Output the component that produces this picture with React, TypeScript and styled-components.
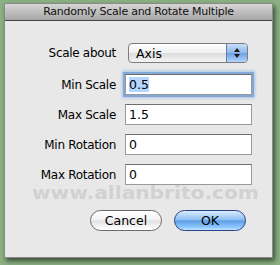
import { Fragment } from "react";
import styled, { createGlobalStyle } from "styled-components";

const Global = createGlobalStyle`
	html, body {
		margin: 0;
		padding: 0;
		background: #8cb283;
		font-family: "DejaVu Sans", "Liberation Sans", sans-serif;
	}
`;

const Page = styled.div`
	width: 280px;
	height: 265px;
	padding: 3px 0 0 4px;
	box-sizing: border-box;
	overflow: hidden;
`;

const Dialog = styled.div`
	position: relative;
	width: 269px;
	height: 255px;
	background: #e8e8e8;
	border: 1px solid #8a8a8a;
	box-sizing: border-box;
	box-shadow: 2px 3px 5px rgba(30, 40, 30, 0.75);
	display: flex;
	flex-direction: column;
`;

const TitleBar = styled.div`
	height: 16px;
	background: linear-gradient(#d6d6d6, #a6a6a6);
	border-bottom: 1px solid #444;
	font-size: 11px;
	letter-spacing: -0.25px;
	color: #111;
	text-align: center;
	line-height: 16px;
`;

const Form = styled.div`
	position: relative;
	z-index: 1;
	display: grid;
	grid-template-columns: 111px 127px;
	column-gap: 9px;
	row-gap: 9px;
	padding-top: 22px;
	align-items: center;
`;

const Label = styled.div`
	font-size: 12px;
	letter-spacing: -0.3px;
	color: #000;
	text-align: right;
`;

const PopupRow = styled.div`
	grid-column: 1 / span 2;
	display: grid;
	grid-template-columns: 111px 120px;
	column-gap: 12px;
	align-items: center;
	margin-bottom: 2px;
`;

const Popup = styled.div`
	height: 20px;
	border: 1px solid #7c7c7c;
	border-radius: 4px;
	box-sizing: border-box;
	background: linear-gradient(#ffffff, #f0f0f0 50%, #dcdcdc 52%, #f4f4f4);
	display: flex;
	align-items: center;
	font-size: 12.5px;
	padding-left: 7px;
	overflow: hidden;
`;

const PopupText = styled.span`
	flex: 1;
`;

const Stepper = styled.div`
	width: 20px;
	height: 100%;
	background: linear-gradient(#c8ddf7, #8fb8ea 50%, #6fa2e2 52%, #b3d3fb);
	border-left: 1px solid #5a7fb0;
	display: flex;
	align-items: center;
	justify-content: center;
`;

const Field = styled.div<{ $focus?: boolean }>`
	height: 21px;
	background: #fff;
	border: 1px solid #9a9a9a;
	border-top-color: #6e6e6e;
	box-sizing: border-box;
	font-size: 12.5px;
	display: flex;
	align-items: center;
	padding-left: 3px;
	box-shadow: ${(p) => (p.$focus ? "0 0 0 2px #82a8d8, 0 0 3px 3px #a9c4e6" : "none")};
`;

const Selected = styled.span`
	background: #b5d5ff;
`;

const Buttons = styled.div`
	display: flex;
	justify-content: flex-end;
	gap: 12px;
	padding: 25px 26px 0 0;
`;

const Button = styled.div<{ $default?: boolean }>`
	width: 72px;
	height: 21px;
	border-radius: 11px;
	box-sizing: border-box;
	border: 1px solid ${(p) => (p.$default ? "#29428a" : "#6b6b6b")};
	background: ${(p) =>
		p.$default
			? "linear-gradient(#d9ecff, #8fc0f2 45%, #5e9fe6 52%, #8cc6ff 85%, #c6e6ff)"
			: "linear-gradient(#ffffff, #f3f3f3 45%, #e2e2e2 52%, #f7f7f7 85%, #ffffff)"};
	font-size: 12.5px;
	display: flex;
	align-items: center;
	justify-content: center;
	color: #000;
`;

// watermark sits over the dialog, just under the last field
const Watermark = styled.div`
	position: absolute;
	left: 27px;
	top: 178px;
	font-family: "DejaVu Sans", sans-serif;
	font-weight: bold;
	font-size: 18px;
	line-height: normal;
	transform: scaleX(1.12);
	transform-origin: left center;
	color: rgba(190, 190, 190, 0.55);
	pointer-events: none;
`;

const Arrows = () => (
	<svg width="8" height="12" viewBox="0 0 8 12">
		<path d="M4 1 L7 5 L1 5 Z" fill="#1a1a1a" />
		<path d="M4 11 L7 7 L1 7 Z" fill="#1a1a1a" />
	</svg>
);

const rows = [
	{ label: "Min Scale", value: "0.5", focus: true },
	{ label: "Max Scale", value: "1.5" },
	{ label: "Min Rotation", value: "0" },
	{ label: "Max Rotation", value: "0" },
];

export default function App() {
	return (
		<Page>
			<Global />
			<Dialog>
				<TitleBar>Randomly Scale and Rotate Multiple</TitleBar>
				<Watermark>www.allanbrito.com</Watermark>
				<Form>
					<PopupRow>
						<Label>Scale about</Label>
						<Popup>
							<PopupText>Axis</PopupText>
							<Stepper>
								<Arrows />
							</Stepper>
						</Popup>
					</PopupRow>
					{rows.map((r) => (
						<Fragment key={r.label}>
							<Label>{r.label}</Label>
							<Field $focus={r.focus}>
								{r.focus ? <Selected>{r.value}</Selected> : r.value}
							</Field>
						</Fragment>
					))}
				</Form>
				<Buttons>
					<Button>Cancel</Button>
					<Button $default>OK</Button>
				</Buttons>
			</Dialog>
		</Page>
	);
}
